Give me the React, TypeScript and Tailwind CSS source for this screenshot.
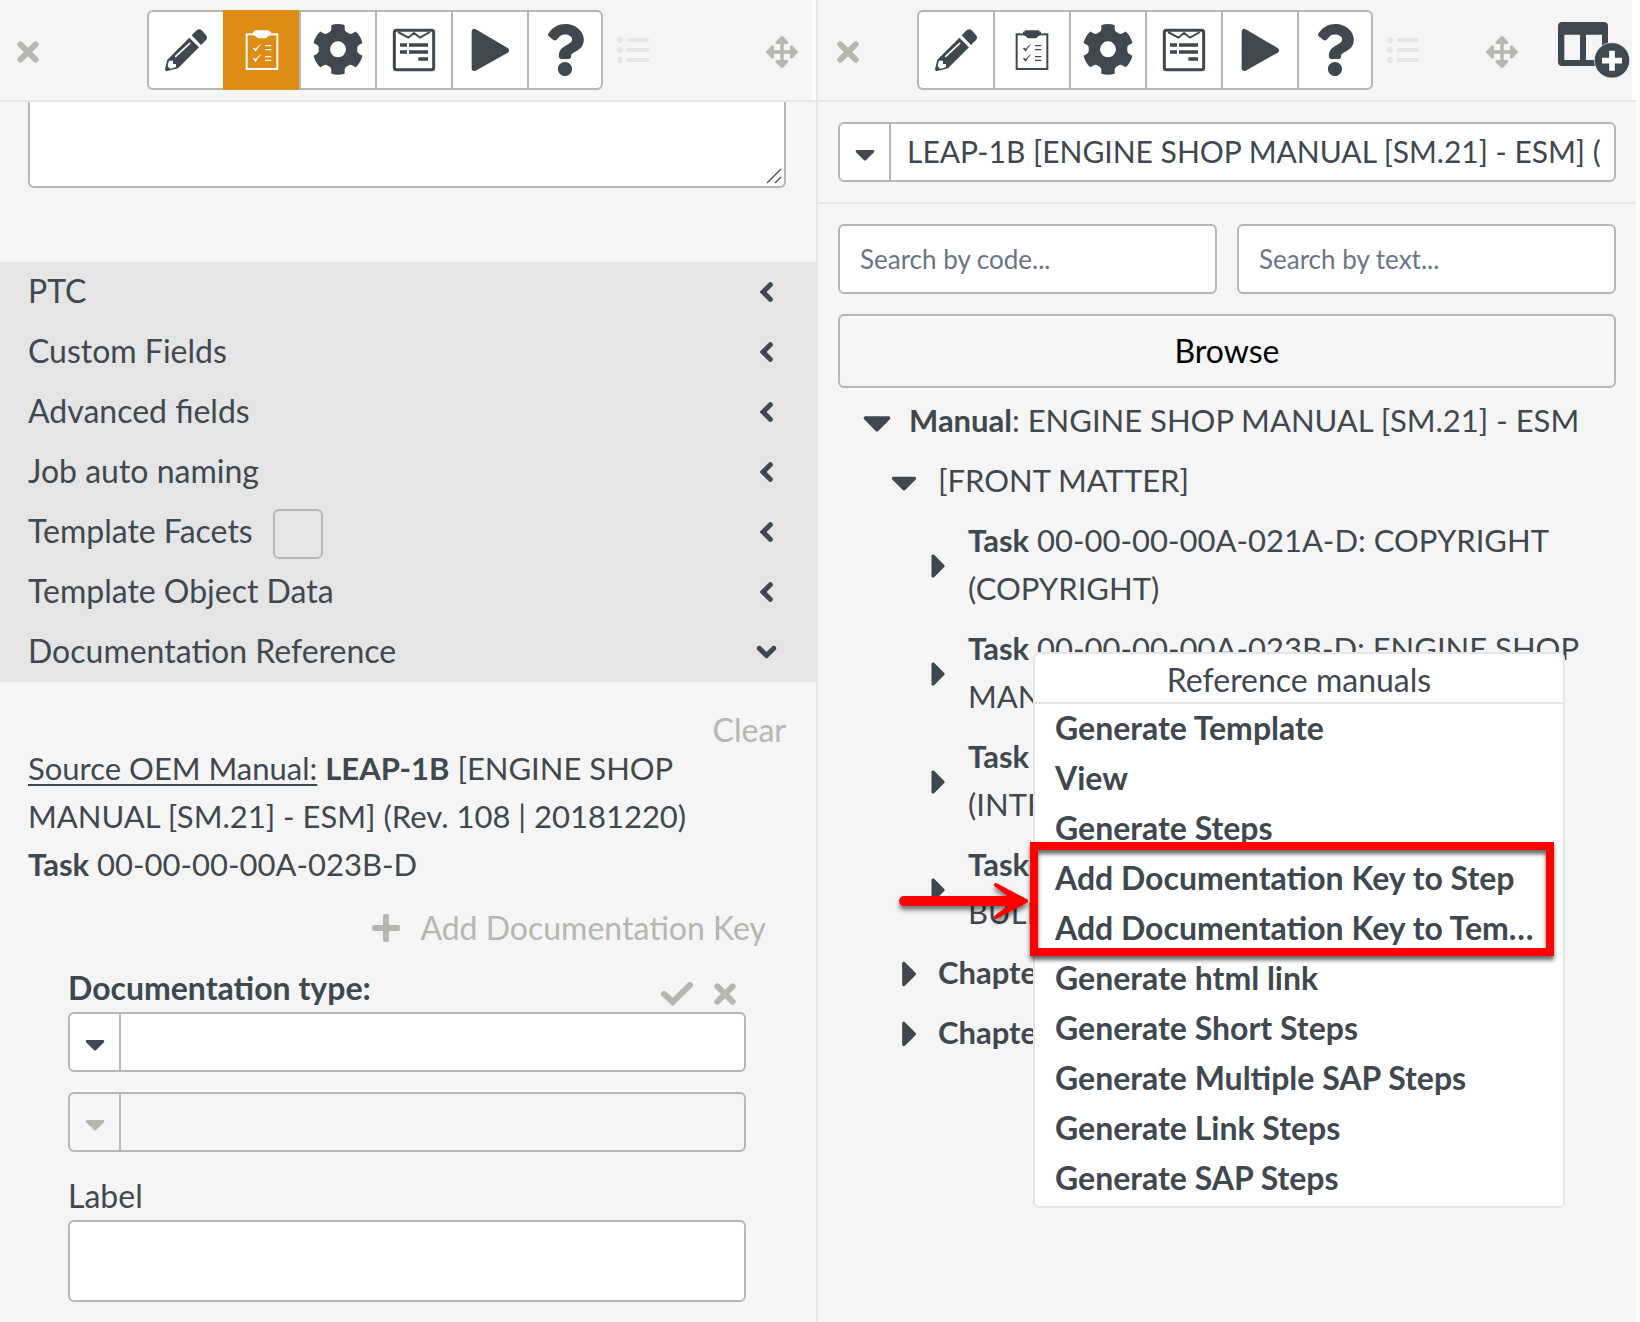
import type { ReactNode } from "react";
import { FaArrowsAlt, FaCaretDown, FaCaretRight, FaQuestion } from "react-icons/fa";
import { clsx } from "clsx";

const sections = [
    { title: "PTC" },
    { title: "Custom Fields" },
    { title: "Advanced fields" },
    { title: "Job auto naming" },
    { title: "Template Facets", checkbox: true },
    { title: "Template Object Data" },
    { title: "Documentation Reference", open: true },
];

const tasks = [
    "00-00-00-00A-021A-D: COPYRIGHT (COPYRIGHT)",
    "00-00-00-00A-023B-D: ENGINE SHOP MANUAL",
    "00-00-00-00A-018A-D: INTRO (INTRODUCTION)",
    "00-00-00-00A-008A-D: SERVICE BULLETIN LIST",
];

const menuItems = [
    "Generate Template",
    "View",
    "Generate Steps",
    "Add Documentation Key to Step",
    "Add Documentation Key to Template",
    "Generate html link",
    "Generate Short Steps",
    "Generate Multiple SAP Steps",
    "Generate Link Steps",
    "Generate SAP Steps",
];

export default function App() {
    return (
        <div className="flex min-h-screen bg-white pr-1 font-['Lato',sans-serif] text-[32px] leading-12 text-[#3f484f]">
            <TemplatePanel />
            <ManualPanel />
        </div>
    );
}

function TemplatePanel() {
    return (
        <section className="flex w-1/2 flex-col border-r-2 border-[#e5e5e5] bg-[#f5f5f5]">
            <PanelHeader active="Template" />

            <div className="relative mr-[30px] ml-7 h-[86px]">
                <textarea
                    aria-label="Description"
                    className="block h-full w-full resize-none rounded-b-md border-2 border-t-0 border-[#b7b6b1] bg-white px-4"
                />
                <svg className="absolute right-1 bottom-1 size-4" viewBox="0 0 16 16" stroke="#3f484f" strokeWidth="1.3">
                    <path d="M1 15 15 1M9 15l6-6" />
                </svg>
            </div>

            <div className="mt-[74px] bg-[#e5e5e5]">
                {sections.map((section) => (
                    <SectionRow key={section.title} {...section} />
                ))}
            </div>

            <div className="flex flex-col pt-6 pr-[30px] pb-5 pl-7">
                <button className="self-end text-[#b7b6b1]">Clear</button>
                <div className="-mt-2.5 pr-20 text-[31px]">
                    <p>
                        <span className="underline decoration-2 underline-offset-4">Source OEM Manual:</span>{" "}
                        <b>LEAP-1B</b> [ENGINE SHOP MANUAL [SM.21] - ESM] (Rev. 108 | 20181220)
                    </p>
                    <p>
                        <b>Task</b> 00-00-00-00A-023B-D
                    </p>
                </div>
                <button className="mt-4 mr-5 flex items-center gap-5 self-end text-[#b7b6b1]">
                    <PlusIcon />
                    Add Documentation Key
                </button>

                <div className="mt-3 mr-10 ml-10 flex flex-col">
                    <div className="flex items-center justify-between">
                        <label htmlFor="doc-type" className="font-bold">
                            Documentation type:
                        </label>
                        <div className="flex items-center gap-[21px] pt-3 pr-2.5 text-[#b7b6b1]">
                            <button aria-label="Confirm">
                                <CheckIcon />
                            </button>
                            <button aria-label="Cancel">
                                <CrossIcon />
                            </button>
                        </div>
                    </div>
                    <SelectBox id="doc-type" label="Documentation type" />
                    <div className="h-5" />
                    <SelectBox id="doc-value" label="Documentation value" disabled />
                    <label htmlFor="doc-label" className="mt-5">
                        Label
                    </label>
                    <input
                        id="doc-label"
                        className="h-[82px] w-full rounded-md border-2 border-[#b7b6b1] bg-white px-4"
                    />
                </div>
            </div>
        </section>
    );
}

function ManualPanel() {
    return (
        <section className="relative flex w-1/2 flex-col bg-[#f5f5f5]">
            <PanelHeader addColumn />

            <div className="border-b-2 border-[#e5e5e5] px-5 py-5">
                <SelectBox id="manual" label="Manual" value="LEAP-1B [ENGINE SHOP MANUAL [SM.21] - ESM] (" />
            </div>

            <div className="flex flex-col gap-5 px-5 pt-5">
                <div className="flex gap-5">
                    <SearchInput placeholder="Search by code..." />
                    <SearchInput placeholder="Search by text..." />
                </div>
                <button className="h-[74px] rounded-md border-2 border-[#b7b6b1] text-black">Browse</button>
            </div>

            <ul className="mt-1 pr-5 text-[31px]">
                <TreeRow open indent="pl-9" iconSize={46}>
                    <b>Manual</b>: ENGINE SHOP MANUAL [SM.21] - ESM
                </TreeRow>
                <TreeRow open indent="pl-[65px]" iconSize={42}>
                    [FRONT MATTER]
                </TreeRow>
                {tasks.map((task) => (
                    <TreeRow key={task} indent="pl-[95px]" iconSize={40}>
                        <b>Task</b> {task}
                    </TreeRow>
                ))}
                <TreeRow indent="pl-[65px]" iconSize={42}>
                    <b>Chapter 05</b>
                </TreeRow>
                <TreeRow indent="pl-[65px]" iconSize={42}>
                    <b>Chapter 72</b>
                </TreeRow>
            </ul>

            <ContextMenu />
        </section>
    );
}

function PanelHeader({ active, addColumn }: { active?: string; addColumn?: boolean }) {
    return (
        <header className="border-b-2 border-[#e5e5e5] bg-white pr-1">
            <div className={clsx("flex h-[100px] items-center bg-[#f5f5f5]", addColumn ? "pr-0.5 pl-[19px]" : "pr-[14px] pl-[17px]")}>
                <button aria-label="Close" className="mt-1 text-[#b7b6b1]">
                    <CrossIcon />
                </button>
                <div className="flex flex-1 items-center justify-center gap-[14px] pr-[9px]">
                    <nav className="flex">
                        {tools.map(({ name, icon }) => (
                            <button
                                key={name}
                                aria-label={name}
                                className={clsx(
                                    "flex h-20 w-[76px] items-center justify-center border-y-2 border-l-2 first:rounded-l-md last:rounded-r-md last:border-r-2",
                                    name === active
                                        ? "border-[#dd8c14] bg-[#dd8c14] text-white"
                                        : "border-[#b7b6b1] bg-white",
                                )}
                            >
                                {icon}
                            </button>
                        ))}
                    </nav>
                    <svg className="h-[26px] w-8" viewBox="0 0 96 78" fill="#e5e5e5">
                        <circle cx="9" cy="9" r="9" />
                        <circle cx="9" cy="39" r="9" />
                        <circle cx="9" cy="69" r="9" />
                        <rect x="30" y="3" width="66" height="12" rx="4" />
                        <rect x="30" y="33" width="66" height="12" rx="4" />
                        <rect x="30" y="63" width="66" height="12" rx="4" />
                    </svg>
                </div>
                <button aria-label="Move" className="mt-1 text-[#b7b6b1]">
                    <FaArrowsAlt size={32} />
                </button>
                {addColumn && (
                    <button aria-label="Add column" className="ml-10">
                        <svg className="h-14 w-[72px]" viewBox="0 0 216 168">
                            <path
                                fill="currentColor"
                                fillRule="evenodd"
                                d="M12 0H138Q150 0 150 12V120Q150 132 138 132H12Q0 132 0 120V12Q0 0 12 0ZM19 38V114H66V38ZM84 38V114H132V38Z"
                            />
                            <circle cx="162" cy="115" r="53" fill="currentColor" stroke="#f5f5f5" strokeWidth="2" />
                            <path d="M162 86V146M132 116H192" stroke="#fff" strokeWidth="17" />
                        </svg>
                    </button>
                )}
            </div>
        </header>
    );
}

function SectionRow({ title, checkbox, open }: { title: string; checkbox?: boolean; open?: boolean }) {
    return (
        <div className="flex h-[60px] items-center pr-10 pl-7">
            <label htmlFor={checkbox ? "facets" : undefined} className="pb-0.5">
                {title}
            </label>
            {checkbox && (
                <input
                    id="facets"
                    type="checkbox"
                    className="mt-1 ml-5 size-[50px] appearance-none rounded-md border-2 border-[#b7b6b1]"
                />
            )}
            <button aria-label={title} aria-expanded={!!open} className="ml-auto flex w-5 justify-center">
                <svg
                    className={clsx("h-5 w-[13px]", open && "-rotate-90")}
                    viewBox="0 0 39 60"
                    fill="none"
                    stroke="currentColor"
                    strokeWidth="15"
                    strokeLinecap="round"
                >
                    <path d="M31 8 9 30 31 52" />
                </svg>
            </button>
        </div>
    );
}

type SelectBoxProps = { id: string; label: string; value?: string; disabled?: boolean };

function SelectBox({ id, label, value = "", disabled }: SelectBoxProps) {
    return (
        <div
            className={clsx(
                "flex h-[60px] w-full overflow-hidden rounded-md border-2 border-[#b7b6b1]",
                disabled ? "text-[#b7b6b1]" : "bg-white",
            )}
        >
            <span className="flex w-[51px] shrink-0 items-center justify-center border-r-2 border-[#b7b6b1] pt-1">
                <FaCaretDown size={32} />
            </span>
            <select
                id={id}
                aria-label={label}
                disabled={disabled}
                className="h-full min-w-0 flex-1 appearance-none pr-2 pb-0.5 pl-4 text-[30px]"
            >
                <option>{value}</option>
            </select>
        </div>
    );
}

function SearchInput({ placeholder }: { placeholder: string }) {
    return (
        <input
            type="search"
            aria-label={placeholder}
            placeholder={placeholder}
            className="h-[70px] min-w-0 flex-1 rounded-md border-2 border-[#b7b6b1] bg-white px-5 text-[26px] placeholder:text-[#6b7585]"
        />
    );
}

type TreeRowProps = { indent: string; iconSize: number; open?: boolean; children: ReactNode };

function TreeRow({ indent, iconSize, open, children }: TreeRowProps) {
    const Caret = open ? FaCaretDown : FaCaretRight;

    return (
        <li className={clsx("flex items-center pt-1 pb-2", indent)}>
            <button
                aria-label="Toggle"
                className={clsx("flex h-12 w-[55px] shrink-0 items-center pt-1", !open && "pl-1.5")}
            >
                <Caret size={iconSize} />
            </button>
            <span>{children}</span>
        </li>
    );
}

function ContextMenu() {
    return (
        <div className="absolute top-[652px] left-[215px] w-[532px] rounded-md border-2 border-[#e5e5e5] bg-white">
            <div className="border-b-2 border-[#e5e5e5] pt-1 text-center leading-11">Reference manuals</div>
            <ul className="pb-0.5">
                {menuItems.map((item) => (
                    <li key={item}>
                        <button className="block h-[50px] w-full truncate pr-6 pb-1 pl-5 text-left font-bold">
                            {item}
                        </button>
                    </li>
                ))}
            </ul>

            {/* highlight around the two documentation key entries */}
            <div className="pointer-events-none absolute top-[188px] -left-[5px] h-[114px] w-[524px] border-8 border-[#ff0000] drop-shadow-[0_4px_2px_rgba(0,0,0,0.6)]" />
            <svg
                className="pointer-events-none absolute top-[223px] -left-[140px] h-12 w-36 drop-shadow-[0_4px_2px_rgba(0,0,0,0.5)]"
                viewBox="0 0 144 48"
                fill="none"
                stroke="#ff0000"
                strokeLinecap="round"
                strokeLinejoin="round"
            >
                <path d="M9 24H124" strokeWidth="10" />
                <path d="M101 8 131 24 101 40 122 24Z" fill="#ff0000" strokeWidth="4" />
            </svg>
        </div>
    );
}

function CrossIcon() {
    return (
        <svg className="size-[22px]" viewBox="0 0 66 66" stroke="currentColor" strokeWidth="18" strokeLinecap="round">
            <path d="M10 10 56 56M56 10 10 56" />
        </svg>
    );
}

function CheckIcon() {
    return (
        <svg
            className="h-6 w-8"
            viewBox="0 0 96 72"
            fill="none"
            stroke="currentColor"
            strokeWidth="18"
            strokeLinecap="round"
        >
            <path d="M9 36 35 60 87 9" />
        </svg>
    );
}

function PlusIcon() {
    return (
        <svg className="size-7" viewBox="0 0 84 84" fill="currentColor">
            <rect x="33" width="18" height="84" rx="6" />
            <rect y="33" width="84" height="18" rx="6" />
        </svg>
    );
}

function ToolIcon({ children }: { children: ReactNode }) {
    return (
        <svg className="size-[60px]" viewBox="0 0 180 180" fill="currentColor">
            {children}
        </svg>
    );
}

const tools = [
    {
        name: "Edit",
        icon: (
            <ToolIcon>
                <path d="M107 46 122 31Q129 24 137 31L149 44Q157 52 150 60L135 75Z" />
                <path
                    fillRule="evenodd"
                    d="M100 53 129 82 66 145 33 153Q27 154 27 148L34 119ZM39 122Q36 131 35 139L42 146Q52 145 60 141L60 132H51V122Z"
                />
                <path d="M59 109 101 70" stroke="#fff" strokeWidth="5" strokeLinecap="round" />
            </ToolIcon>
        ),
    },
    {
        name: "Template",
        icon: (
            <ToolIcon>
                <rect x="44" y="43" width="92" height="104" fill="none" stroke="currentColor" strokeWidth="6" />
                <path d="M72 31H108Q112 31 113 35H117V45Q109 46 106 52L102 55H78L74 52Q71 46 63 45V35H67Q68 31 72 31Z" />
                <path d="M62 84 68 83 71 87Q77 76 89 71Q78 81 71 95ZM62 115 68 114 71 118Q77 107 89 102Q78 112 71 126Z" />
                <path d="M99 77H118M99 89H118M99 110H118M99 121H118" stroke="currentColor" strokeWidth="4" />
            </ToolIcon>
        ),
    },
    {
        name: "Settings",
        icon: (
            <ToolIcon>
                <g transform="translate(90 88)">
                    <circle r="41" fill="none" stroke="currentColor" strokeWidth="34" />
                    {[0, 60, 120, 180, 240, 300].map((angle) => (
                        <path
                            key={angle}
                            transform={`rotate(${angle})`}
                            d="M-24 -52Q-20 -56 -20 -62V-73Q0 -79 20 -73V-62Q20 -56 24 -52Z"
                        />
                    ))}
                </g>
            </ToolIcon>
        ),
    },
    {
        name: "Form",
        icon: (
            <ToolIcon>
                <rect x="31" y="31" width="118" height="118" rx="6" fill="none" stroke="currentColor" strokeWidth="9" />
                <path d="M42 36 73 53 90 39 108 53 138 36" fill="none" stroke="currentColor" strokeWidth="6" />
                <path d="M48 75H69M75 75H132M48 96H69M75 96H132M103 117H132" stroke="currentColor" strokeWidth="10" />
            </ToolIcon>
        ),
    },
    {
        name: "Run",
        icon: (
            <ToolIcon>
                <path d="M43 35V145L139 91Z" stroke="currentColor" strokeWidth="16" strokeLinejoin="round" />
            </ToolIcon>
        ),
    },
    { name: "Help", icon: <FaQuestion size={52} /> },
];
